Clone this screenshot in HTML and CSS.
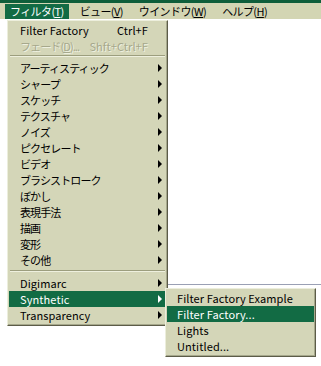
FILE: index.html
```html
<!DOCTYPE html>
<html lang="ja">
<head>
  <meta charset="UTF-8" />
  <title>フィルタ</title>
  <link rel="stylesheet" href="styles.css">
</head>
<body>
  <div class="topline"></div>
  <div class="menubar">
    <span class="bar-item active">フィルタ(<u>T</u>)</span>
    <span class="bar-item">ビュー(<u>V</u>)</span>
    <span class="bar-item">ウインドウ(<u>W</u>)</span>
    <span class="bar-item">ヘルプ(<u>H</u>)</span>
  </div>

  <div class="workspace">
    <div class="behind"></div>
    <div class="menu main">
      <div class="item latin"><span class="label">Filter Factory</span><span class="key">Ctrl+F</span></div>
      <div class="item disabled"><span class="label">フェード(<u>D</u>)...</span><span class="key">Shft+Ctrl+F</span></div>
      <div class="sep first"></div>
      <div class="item sub"><span class="label">アーティスティック</span></div>
      <div class="item sub"><span class="label">シャープ</span></div>
      <div class="item sub"><span class="label">スケッチ</span></div>
      <div class="item sub"><span class="label">テクスチャ</span></div>
      <div class="item sub"><span class="label">ノイズ</span></div>
      <div class="item sub"><span class="label">ピクセレート</span></div>
      <div class="item sub"><span class="label">ビデオ</span></div>
      <div class="item sub"><span class="label">ブラシストローク</span></div>
      <div class="item sub"><span class="label">ぼかし</span></div>
      <div class="item sub"><span class="label">表現手法</span></div>
      <div class="item sub"><span class="label">描画</span></div>
      <div class="item sub"><span class="label">変形</span></div>
      <div class="item sub"><span class="label">その他</span></div>
      <div class="sep"></div>
      <div class="item sub latin"><span class="label">Digimarc</span></div>
      <div class="item sub latin selected"><span class="label">Synthetic</span>
        <div class="menu submenu">
          <div class="item latin"><span class="label">Filter Factory Example</span></div>
          <div class="item latin selected"><span class="label">Filter Factory...</span></div>
          <div class="item latin"><span class="label">Lights</span></div>
          <div class="item latin"><span class="label">Untitled...</span></div>
        </div>
      </div>
      <div class="item sub latin"><span class="label">Transparency</span></div>
    </div>
  </div>
</body>
</html>
```

FILE: styles.css
```css
body {
  margin: 0;
  min-height: 366px;
  background: #ffffff;
  font-family: 'Noto Sans CJK JP', 'Noto Sans', sans-serif;
  font-size: 11px;
  color: #000;
}
u {
  text-decoration: underline;
  text-underline-offset: 1px;
}
.topline {
  height: 3px;
  background: #0e5e3a;
}
.menubar {
  display: flex;
  height: 16px;
  background: #d3d5b3;
  align-items: center;
}
.bar-item {
  padding: 0 5px;
  margin-right: 6px;
  line-height: 15px;
  height: 15px;
  font-size: 11px;
  letter-spacing: -0.6px;
}
.bar-item:first-child {
  margin-left: 5px;
}
.bar-item.active {
  background: #126b44;
  color: #fff;
}
.workspace {
  position: relative;
  padding: 1px 0 0 7px;
}
.behind {
  position: absolute;
  left: 168px;
  top: 265px;
  width: 153px;
  height: 70px;
  border-top: 1px solid #9aa0b4;
}
.menu {
  width: 157px;
  background: #d4d6b8;
  border: 1px solid;
  border-color: #eceedc #5c5c48 #5c5c48 #eceedc;
  box-shadow: inset -1px -1px 0 #a6a88c;
  padding: 1px 1px 2px 1px;
}
.item {
  position: relative;
  display: flex;
  justify-content: space-between;
  height: 16px;
  line-height: 16px;
  padding: 0 18px 0 11px;
  white-space: nowrap;
  font-size: 11px;
  letter-spacing: -0.9px;
}
.item.latin {
  letter-spacing: 0.1px;
}
.item .key {
  letter-spacing: 0.1px;
}
.item.disabled {
  color: #a6a88c;
  text-shadow: 1px 1px 0 #eef0e0;
}
.item.sub::after {
  content: '';
  position: absolute;
  right: 4px;
  top: 4px;
  border-left: 4px solid #000;
  border-top: 4px solid transparent;
  border-bottom: 4px solid transparent;
}
.item.selected {
  background: #126b44;
  color: #fff;
}
.item.sub.selected::after {
  border-left-color: #fff;
}
.sep {
  height: 1px;
  margin: 2px 1px 3px;
  background: #9c9e7e;
  border-bottom: 1px solid #eef0de;
}
.sep.first {
  margin-top: 1px;
}
.submenu {
  position: absolute;
  left: 156px;
  top: -3px;
  width: 147px;
  color: #000;
  z-index: 2;
}
.submenu .item {
  padding-left: 10px;
}
```
